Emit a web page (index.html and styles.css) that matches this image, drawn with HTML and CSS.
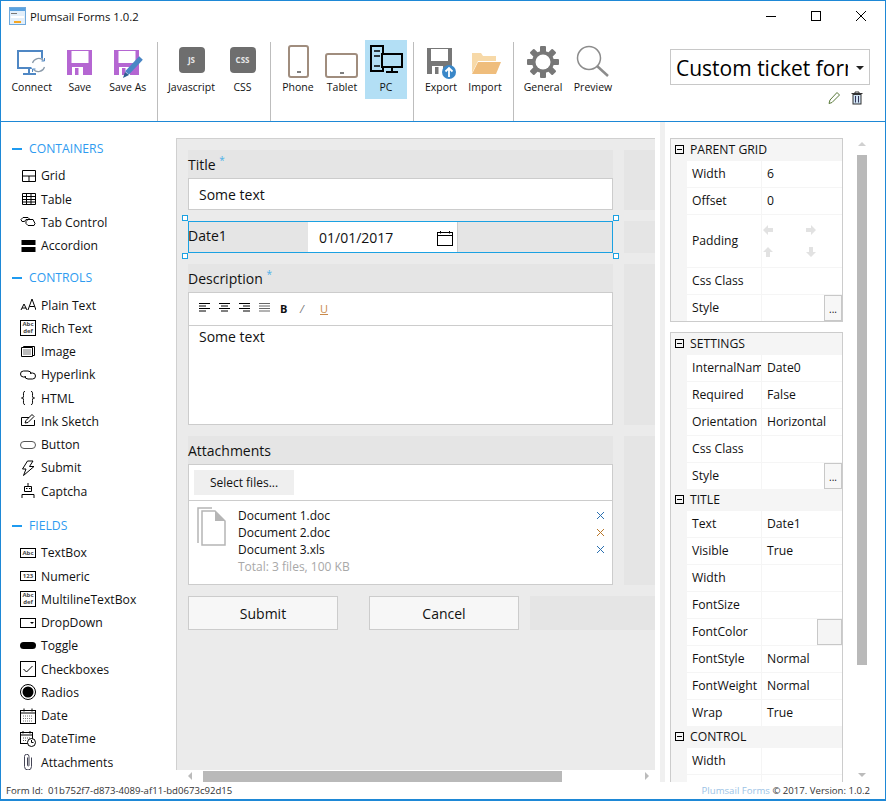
FILE: index.html
```html
<!DOCTYPE html>
<html lang="en">
<head>
	<meta charset="UTF-8">
	<title>Plumsail Forms 1.0.2</title>
	<link rel="stylesheet" href="styles.css">
</head>
<body>
<div class="window">

	<!-- Title bar -->
	<div class="titleBar">
		<svg class="appIcon" width="18" height="18" viewBox="0 0 18 18"><rect x="0.5" y="0.5" width="16" height="17" fill="#e3effa" stroke="#6fa9dc"/><rect x="1" y="1" width="15" height="3" fill="#5aa2e0"/><rect x="2" y="6" width="6" height="1" fill="#777"/><rect x="2" y="9" width="13" height="2" fill="#fff"/><rect x="5" y="14" width="7" height="2" fill="#f5a623"/></svg>
		<span class="appName">Plumsail Forms 1.0.2</span>
		<div class="windowButtons">
			<svg width="12" height="12" viewBox="0 0 12 12"><path d="M1 6.5h10" stroke="#000"/></svg>
			<svg width="12" height="12" viewBox="0 0 12 12"><rect x="1.5" y="1.5" width="9" height="9" fill="none" stroke="#000"/></svg>
			<svg width="12" height="12" viewBox="0 0 12 12"><path d="M1 1l10 10M11 1L1 11" stroke="#000"/></svg>
		</div>
	</div>

	<!-- Toolbar -->
	<div class="toolbar">
		<div class="toolGroup groupFile">
			<div class="tool">
				<svg width="32" height="30" viewBox="0 0 32 30"><rect x="2" y="2" width="24" height="17" fill="none" stroke="#4f87c4" stroke-width="2"/><path d="M13 20v4M7 25h13" stroke="#4f87c4" stroke-width="2"/><circle cx="22.500" cy="16" r="7.500" fill="#fff"/><path d="M16.500 14a6.500 6.500 0 0111-2.500M28.500 18a6.500 6.500 0 01-11 2.500" fill="none" stroke="#8a9aaa" stroke-width="1.200"/><path d="M28.500 9v3h-3M16.500 23v-3h3" fill="none" stroke="#4f87c4"/></svg>
				<span>Connect</span>
			</div>
			<div class="tool">
				<svg width="32" height="30" viewBox="0 0 32 30"><path d="M3 1h25v25H3z" fill="#b566d2"/><rect x="7.500" y="2" width="17" height="12" fill="#fff"/><rect x="8" y="18" width="11" height="8" fill="#fff"/><rect x="11" y="19" width="3.500" height="7" fill="#b566d2"/></svg>
				<span>Save</span>
			</div>
			<div class="tool">
				<svg width="34" height="30" viewBox="0 0 34 30"><path d="M3 1h25v25H3z" fill="#b566d2"/><rect x="7.500" y="2" width="17" height="12" fill="#fff"/><rect x="8" y="18" width="11" height="8" fill="#fff"/><rect x="11" y="19" width="3.500" height="7" fill="#b566d2"/><path d="M30 9L16 24" stroke="#4a86c5" stroke-width="5"/><path d="M12 29l2-6 4 3z" fill="#2f5f90"/></svg>
				<span>Save As</span>
			</div>
		</div>
		<div class="toolGroup groupCode">
			<div class="tool">
				<div class="codeBadge">JS</div>
				<span>Javascript</span>
			</div>
			<div class="tool">
				<div class="codeBadge">CSS</div>
				<span>CSS</span>
			</div>
		</div>
		<div class="toolGroup groupDevice">
			<div class="tool">
				<svg width="32" height="34" viewBox="0 0 32 34"><rect x="7" y="1" width="19" height="31" rx="2" fill="#fff" stroke="#a08d7e" stroke-width="2"/><path d="M15 27h4" stroke="#555" stroke-width="1.5"/></svg>
				<span>Phone</span>
			</div>
			<div class="tool">
				<svg width="34" height="34" viewBox="0 0 34 34"><rect x="1" y="9" width="31" height="23" rx="2" fill="#fff" stroke="#a08d7e" stroke-width="2"/><path d="M15 28h4" stroke="#555" stroke-width="1.5"/></svg>
				<span>Tablet</span>
			</div>
			<div class="tool toolActive">
				<svg width="34" height="34" viewBox="0 0 34 34"><path d="M2 1h12v25H2z" fill="none" stroke="#000" stroke-width="2"/><path d="M5 6h6M5 11h6M5 21h6" stroke="#000" stroke-width="1.5"/><rect x="13" y="9" width="20" height="13" fill="#b3dff5" stroke="#000" stroke-width="2"/><path d="M23 22v4M17 27h12" stroke="#000" stroke-width="2"/></svg>
				<span>PC</span>
			</div>
		</div>
		<div class="toolGroup groupData">
			<div class="tool">
				<svg width="32" height="32" viewBox="0 0 32 32"><path d="M2 1h25v26H2z" fill="#777"/><rect x="6" y="2" width="17" height="12" fill="#fff"/><rect x="7" y="19" width="11" height="8" fill="#fff"/><rect x="10" y="20" width="3.500" height="7" fill="#777"/><circle cx="24" cy="25" r="7" fill="#3a87c8"/><path d="M24 30v-9M20.5 24.5L24 21l3.500 3.500" stroke="#fff" stroke-width="1.800" fill="none"/></svg>
				<span>Export</span>
			</div>
			<div class="tool">
				<svg width="32" height="30" viewBox="0 0 32 30"><path d="M3 24V4h9l2 3h13v5H9z" fill="#f7d9a8" /><path d="M3 25l6-12h23l-5 12z" fill="#efbd7c"/></svg>
				<span>Import</span>
			</div>
		</div>
		<div class="toolGroup groupView">
			<div class="tool toolWide">
				<svg width="34" height="34" viewBox="0 0 34 34"><g fill="#777"><rect x="14" y="1" width="6" height="32" rx="1"/><rect x="14" y="1" width="6" height="32" rx="1" transform="rotate(45 17 17)"/><rect x="14" y="1" width="6" height="32" rx="1" transform="rotate(90 17 17)"/><rect x="14" y="1" width="6" height="32" rx="1" transform="rotate(135 17 17)"/></g><circle cx="17" cy="17" r="11" fill="#777"/><circle cx="17" cy="17" r="7.500" fill="#fff"/></svg>
				<span>General</span>
			</div>
			<div class="tool toolWide">
				<svg width="34" height="34" viewBox="0 0 34 34"><circle cx="13" cy="13" r="11.500" fill="none" stroke="#8c8c8c" stroke-width="1.500"/><path d="M21 21l11 10" stroke="#8c8c8c" stroke-width="2.500"/></svg>
				<span>Preview</span>
			</div>
		</div>
		<div class="formPicker">
			<div class="formCombo">
				<span class="formName">Custom ticket form</span>
				<span class="comboArrow"></span>
			</div>
			<div class="formActions">
				<svg width="14" height="14" viewBox="0 0 14 14"><path d="M3 9l7-7.500 2.500 2.500L5 11.500l-3 1z" fill="#fff" stroke="#5a7a3a"/></svg>
				<svg width="14" height="14" viewBox="0 0 14 14"><path d="M1.500 2.500h11M5 2.500V1h4v1.500" fill="none" stroke="#333"/><rect x="3" y="3.500" width="8" height="9.500" fill="#cfe3f5" stroke="#333"/><path d="M5.500 5v6.500M8.500 5v6.500" stroke="#335"/></svg>
			</div>
		</div>
	</div>

	<div class="mainArea">

		<!-- Left palette -->
		<div class="palette">
			<div class="paletteHead">CONTAINERS</div>
			<div class="paletteItem"><svg width="16" height="16" viewBox="0 0 16 16"><path d="M2.500 2.500h13v11h-13zM2.500 8h13M9 8v5.500" fill="none" stroke="#000"/></svg>Grid</div>
			<div class="paletteItem"><svg width="16" height="16" viewBox="0 0 16 16"><path d="M2.500 2.500h13v11h-13zM2.500 5.500h13M2.500 8.500h13M2.500 11h13M6.500 2.500v11M11 2.500v11" fill="none" stroke="#000"/></svg>Table</div>
			<div class="paletteItem"><svg width="16" height="16" viewBox="0 0 16 16"><path d="M1 5.500l2-2h5l2 2H6l-1.500 2H2zM6 7.500l2-2h5l2 4-1 2H8l-2-2z" fill="none" stroke="#000"/></svg>Tab Control</div>
			<div class="paletteItem"><svg width="16" height="16" viewBox="0 0 16 16"><path d="M1.500 2h14v5h-14zM1.500 9h14v5h-14z" fill="#000"/></svg>Accordion</div>

			<div class="paletteHead headGap">CONTROLS</div>
			<div class="paletteItem"><svg width="16" height="16" viewBox="0 0 16 16"><path d="M1 13l3-6 3 6M2 11h4M8 13l4-11 4 11M9.500 9.500h5" fill="none" stroke="#000"/></svg>Plain Text</div>
			<div class="paletteItem"><span class="abcBox abcTall">Abc<br>def</span>Rich Text</div>
			<div class="paletteItem"><svg width="16" height="16" viewBox="0 0 16 16"><path d="M1.500 3.500h11v9h-11zM3.500 3.500v-1h11v9h-2" fill="none" stroke="#000"/><rect x="3" y="5" width="8" height="6" fill="#bbb"/></svg>Image</div>
			<div class="paletteItem"><svg width="16" height="16" viewBox="0 0 16 16"><path d="M6 10H3.500a3 3 0 010-6H8a3 3 0 013 3M10 6h2.500a3 3 0 010 6H8a3 3 0 01-3-3" fill="none" stroke="#000"/></svg>Hyperlink</div>
			<div class="paletteItem"><svg width="16" height="16" viewBox="0 0 16 16"><path d="M5 1.500C3 1.500 3.500 3 3.500 5.500S3 8 1.500 8C3 8 3.500 8 3.500 10.500S3 14.500 5 14.500M11 1.500c2 0 1.500 1.500 1.500 4S13 8 14.500 8c-1.500 0-2 0-2 2.500s.5 4-1.500 4" fill="none" stroke="#000"/></svg>HTML</div>
			<div class="paletteItem"><svg width="16" height="16" viewBox="0 0 16 16"><path d="M9 4.500H1.500v8h13V7" fill="none" stroke="#000"/><path d="M5 10l1-2.500 6-6 2 2-6 6z" fill="#fff" stroke="#000"/></svg>Ink Sketch</div>
			<div class="paletteItem"><svg width="16" height="16" viewBox="0 0 16 16"><rect x="0.500" y="4.500" width="15" height="7" rx="3.500" fill="#fff" stroke="#555"/></svg>Button</div>
			<div class="paletteItem"><svg width="16" height="16" viewBox="0 0 16 16"><path d="M7.500 1H13L9.500 6.500H14L3.500 15.500 6 9H2.500z" fill="none" stroke="#000"/></svg>Submit</div>
			<div class="paletteItem"><svg width="16" height="16" viewBox="0 0 16 16"><path d="M8 0v3M4.500 3.500h7v5h-7zM2 15v-3.500h12V15" fill="none" stroke="#000"/><path d="M6 5.500h1.500M9 5.500h1.500" stroke="#000"/></svg>Captcha</div>

			<div class="paletteHead headGapWide">FIELDS</div>
			<div class="paletteItem"><span class="abcBox">Abc</span>TextBox</div>
			<div class="paletteItem"><span class="abcBox">123</span>Numeric</div>
			<div class="paletteItem"><span class="abcBox abcTall">Abc<br>def</span>MultilineTextBox</div>
			<div class="paletteItem"><svg width="16" height="16" viewBox="0 0 16 16"><rect x="0.500" y="3.500" width="15" height="9" fill="none" stroke="#000"/><path d="M10 7h4l-2 2z" fill="#000"/></svg>DropDown</div>
			<div class="paletteItem"><svg width="16" height="16" viewBox="0 0 16 16"><rect x="0" y="4" width="16" height="7" rx="3.500" fill="#000"/></svg>Toggle</div>
			<div class="paletteItem"><svg width="16" height="16" viewBox="0 0 16 16"><rect x="0.500" y="0.500" width="15" height="15" fill="none" stroke="#000"/><path d="M3.500 8l3 3 6-6" fill="none" stroke="#000"/></svg>Checkboxes</div>
			<div class="paletteItem"><svg width="16" height="16" viewBox="0 0 16 16"><circle cx="8" cy="8" r="7.500" fill="none" stroke="#000"/><circle cx="8" cy="8" r="5.500" fill="#000"/></svg>Radios</div>
			<div class="paletteItem"><svg width="16" height="16" viewBox="0 0 16 16"><rect x="0.500" y="2.500" width="15" height="13" fill="none" stroke="#000"/><path d="M0.500 5h15M4 0.500v3M12 0.500v3" stroke="#000"/><path d="M3 8h10M3 10.500h10M3 13h10" stroke="#777" stroke-dasharray="1 1"/></svg>Date</div>
			<div class="paletteItem"><svg width="16" height="16" viewBox="0 0 16 16"><rect x="0.500" y="1.500" width="12" height="11" fill="none" stroke="#000"/><path d="M0.500 4h12M3 0v2.500M10 0v2.500" stroke="#000"/><path d="M3 7h7M3 9.500h4" stroke="#555" stroke-dasharray="1 1"/><circle cx="11.500" cy="11.500" r="4" fill="#fff" stroke="#000"/><path d="M11.500 9v2.500h2" fill="none" stroke="#000"/></svg>DateTime</div>
			<div class="paletteItem"><svg width="16" height="16" viewBox="0 0 16 16"><path d="M12 4v9a3.500 3.500 0 01-7 0V3a2.200 2.200 0 014.500 0v9a.8.800 0 01-1.500 0V4" fill="none" stroke="#445" transform="translate(-0.500 -0.500)"/></svg>Attachments</div>
		</div>

		<!-- Form canvas -->
		<div class="canvasColumn">
			<div class="canvas">
				<div class="canvasRow">
					<div class="canvasMain">
						<div class="fieldLabel">Title <sup>*</sup></div>
						<div class="textInput">Some text</div>
					</div>
					<div class="ghostColumn"></div>
				</div>

				<div class="canvasRow">
					<div class="canvasMain dateRow">
						<div class="dateLabel">Date1</div>
						<div class="dateInput">
							01/01/2017
							<svg width="17" height="16" viewBox="0 0 17 16"><rect x="1.500" y="2.500" width="15" height="13" fill="#fff" stroke="#000"/><path d="M1.500 5.500h15M4.500 1v2.500M13.500 1v2.500" stroke="#000"/></svg>
						</div>
						<span class="handle handleTL"></span>
						<span class="handle handleTR"></span>
						<span class="handle handleBL"></span>
						<span class="handle handleBR"></span>
					</div>
					<div class="ghostColumn"></div>
				</div>

				<div class="canvasRow">
					<div class="canvasMain">
						<div class="fieldLabel">Description <sup>*</sup></div>
						<div class="editorBar">
							<svg width="14" height="10" viewBox="0 0 14 10"><path d="M1 .5h11M1 3h7M1 5.500h11M1 8h7" stroke="#000"/></svg>
							<svg width="14" height="10" viewBox="0 0 14 10"><path d="M1 .5h11M3 3h7M1 5.500h11M3 8h7" stroke="#000"/></svg>
							<svg width="14" height="10" viewBox="0 0 14 10"><path d="M1 .5h11M5 3h7M1 5.500h11M5 8h7" stroke="#000"/></svg>
							<svg width="14" height="10" viewBox="0 0 14 10"><path d="M1 .5h11M1 3h11M1 5.500h11M1 8h11" stroke="#666"/></svg>
							<b class="fmtBold">B</b>
							<i class="fmtItalic">/</i>
							<u class="fmtUnder">U</u>
						</div>
						<div class="editorBody">Some text</div>
					</div>
					<div class="ghostColumn"></div>
				</div>

				<div class="canvasRow">
					<div class="canvasMain">
						<div class="fieldLabel">Attachments</div>
						<div class="attachBox">
							<div class="attachTop"><div class="selectFiles">Select files...</div></div>
							<div class="attachList">
								<svg class="docIcon" width="30" height="40" viewBox="0 0 30 40"><path d="M1 36V1h14" fill="none" stroke="#b5b5b5" stroke-width="1.500"/><path d="M5 38V4h13l10 10v24z" fill="#fff" stroke="#b5b5b5" stroke-width="1.500"/><path d="M18 4v10h10z" fill="#b5b5b5"/></svg>
								<div class="attachFiles">
									<div class="attachFile">Document 1.doc<svg class="removeFile" width="9" height="9" viewBox="0 0 9 9"><path d="M1 1l7 7M8 1L1 8" stroke="#2A6FB0"/></svg></div>
									<div class="attachFile">Document 2.doc<svg class="removeFile" width="9" height="9" viewBox="0 0 9 9"><path d="M1 1l7 7M8 1L1 8" stroke="#B8772A"/></svg></div>
									<div class="attachFile">Document 3.xls<svg class="removeFile" width="9" height="9" viewBox="0 0 9 9"><path d="M1 1l7 7M8 1L1 8" stroke="#2A6FB0"/></svg></div>
									<div class="attachTotal">Total: 3 files, 100 KB</div>
								</div>
							</div>
						</div>
					</div>
					<div class="ghostColumn"></div>
				</div>

				<div class="buttonRow">
					<div class="formButton">Submit</div>
					<div class="formButton">Cancel</div>
					<div class="ghostButton"></div>
				</div>
			</div>
			<div class="hScroll">
				<span class="arrowLeft"></span>
				<div class="hThumb"></div>
				<span class="arrowRight"></span>
			</div>
		</div>

		<div class="gutterStrip"></div>

		<!-- Properties -->
		<div class="propColumn">
			<div class="propPanel">
				<div class="propHead propHeadTall"><span class="collapse"></span>PARENT GRID</div>
				<div class="propRow"><div class="propName">Width</div><div class="propValue">6</div></div>
				<div class="propRow"><div class="propName">Offset</div><div class="propValue">0</div></div>
				<div class="propRow rowPadding">
					<div class="propName">Padding</div>
					<div class="propValue paddingArrows">
						<svg width="12" height="12" viewBox="0 0 12 12"><path d="M1 6l5-5v3h5v4H6v3z" fill="#e2e2e2"/></svg>
						<svg width="12" height="12" viewBox="0 0 12 12"><path d="M11 6L6 1v3H1v4h5v3z" fill="#e2e2e2"/></svg>
						<svg width="12" height="12" viewBox="0 0 12 12"><path d="M6 1l5 5H8v5H4V6H1z" fill="#e2e2e2"/></svg>
						<svg width="12" height="12" viewBox="0 0 12 12"><path d="M6 11l5-5H8V1H4v5H1z" fill="#e2e2e2"/></svg>
					</div>
				</div>
				<div class="propRow"><div class="propName">Css Class</div><div class="propValue"></div></div>
				<div class="propRow"><div class="propName">Style</div><div class="propValue"><span class="dotsButton">...</span></div></div>
			</div>

			<div class="propPanel">
				<div class="propHead propHeadTall"><span class="collapse"></span>SETTINGS</div>
				<div class="propRow"><div class="propName">InternalName</div><div class="propValue">Date0</div></div>
				<div class="propRow"><div class="propName">Required</div><div class="propValue">False</div></div>
				<div class="propRow"><div class="propName">Orientation</div><div class="propValue">Horizontal</div></div>
				<div class="propRow"><div class="propName">Css Class</div><div class="propValue"></div></div>
				<div class="propRow"><div class="propName">Style</div><div class="propValue"><span class="dotsButton">...</span></div></div>
				<div class="propHead propHeadLow"><span class="collapse"></span>TITLE</div>
				<div class="propRow"><div class="propName">Text</div><div class="propValue">Date1</div></div>
				<div class="propRow"><div class="propName">Visible</div><div class="propValue">True</div></div>
				<div class="propRow"><div class="propName">Width</div><div class="propValue"></div></div>
				<div class="propRow"><div class="propName">FontSize</div><div class="propValue"></div></div>
				<div class="propRow"><div class="propName">FontColor</div><div class="propValue"><span class="colorButton"></span></div></div>
				<div class="propRow"><div class="propName">FontStyle</div><div class="propValue">Normal</div></div>
				<div class="propRow"><div class="propName">FontWeight</div><div class="propValue">Normal</div></div>
				<div class="propRow"><div class="propName">Wrap</div><div class="propValue">True</div></div>
				<div class="propHead propHeadLow"><span class="collapse"></span>CONTROL</div>
				<div class="propRow"><div class="propName">Width</div><div class="propValue"></div></div>
				<div class="propRow"><div class="propName">Placeholder</div><div class="propValue"></div></div>
			</div>
		</div>

		<div class="vScroll">
			<span class="arrowUp"></span>
			<div class="vThumb"></div>
			<span class="arrowDown"></span>
		</div>
	</div>

	<!-- Status bar -->
	<div class="statusBar">
		<span>Form Id:&nbsp; 01b752f7-d873-4089-af11-bd0673c92d15</span>
		<span><span class="statusLink">Plumsail Forms</span> &copy; 2017. Version: 1.0.2</span>
	</div>
</div>
</body>
</html>
```

FILE: styles.css
```css
html, body
{
	margin: 0;
	padding: 0;
	background: #FFFFFF;
}

body
{
	font-family: "Open Sans", "Noto Sans", sans-serif;
	font-size: 12.200px;
	color: #111111;
}

.window
{
	box-sizing: border-box;
	width: 886px;
	height: 801px;
	border: 1px solid #1E88D6;
	border-bottom-width: 2px;
	display: flex;
	flex-direction: column;
	overflow: hidden;
}

/* title bar */
.titleBar
{
	height: 30px;
	flex: none;
	display: flex;
	align-items: center;
	padding: 0 0 0 8px;
}

.appIcon
{
	margin-right: 3px;
}

.appName
{
	font-size: 11.300px;
}

.windowButtons
{
	margin-left: auto;
	display: flex;
	gap: 33px;
	padding-right: 18px;
	padding-bottom: 1px;
}

/* toolbar */
.toolbar
{
	height: 91px;
	flex: none;
	display: flex;
	border-bottom: 1px solid #1E88D6;
	box-sizing: border-box;
	padding-top: 9px;
}

.toolGroup
{
	display: flex;
	box-sizing: border-box;
	border-right: 1px solid #BDBDBD;
	height: 79px;
	margin-top: 2px;
}

.groupFile { width: 157px; padding-left: 7px; }
.groupFile .tool { width: 47.500px; }
.groupFile .tool + .tool { margin-left: 0.500px; }
.groupCode { width: 113px; padding-left: 8px; }
.groupCode .tool { width: 51px; }
.groupDevice { width: 143px; padding-left: 5px; }
.groupDevice .tool { width: 44px; }
.groupData { width: 100px; padding-left: 5px; }
.groupData .tool { width: 44px; }
.groupView { border-right: none; width: 156px; padding-left: 4px; }

.tool
{
	width: 47px;
	height: 59px;
	margin-top: -2px;
	display: flex;
	flex-direction: column;
	align-items: center;
	justify-content: flex-end;
	font-size: 10.500px;
	line-height: 14px;
	padding-bottom: 5px;
	box-sizing: border-box;
	gap: 1px;
}

.tool.toolWide
{
	width: 50px;
}

.groupDevice .toolActive
{
	width: 42px;
	margin: -2px 1px 0;
	background: #B3DFF5;
}

.codeBadge
{
	width: 26px;
	height: 26px;
	border-radius: 4px;
	background: #6E6E6E;
	color: #E8E8E8;
	font-size: 8px;
	font-weight: 700;
	line-height: 26px;
	text-align: center;
	margin-bottom: 6px;
}

.formPicker
{
	width: 199px;
}

.formCombo
{
	box-sizing: border-box;
	width: 200px;
	height: 36px;
	border: 1px solid #C8C8C8;
	display: flex;
	align-items: center;
	padding: 2px 0 0 5px;
	margin-top: 9px;
	background: #FFFFFF;
}

.formName
{
	font-size: 21px;
	width: 172px;
	overflow: hidden;
	white-space: nowrap;
	color: #000000;
}

.comboArrow
{
	width: 0;
	height: 0;
	margin-left: 8px;
	border-left: 4px solid transparent;
	border-right: 4px solid transparent;
	border-top: 4px solid #222222;
}

.formActions
{
	display: flex;
	justify-content: flex-end;
	gap: 9px;
	padding: 6px 5px 0 0;
}

.mainArea
{
	flex: 1;
	display: flex;
	min-height: 0;
	overflow: hidden;
}

/* palette */
.palette
{
	width: 175px;
	flex: none;
	padding-top: 15px;
	box-sizing: border-box;
}

.paletteHead
{
	height: 27.300px;
	line-height: 24px;
	color: #2E9BF0;
	padding-left: 28px;
	position: relative;
}

.paletteHead::before
{
	content: "";
	position: absolute;
	left: 11px;
	top: 11px;
	width: 10px;
	height: 2px;
	background: #1E9AF0;
}

.headGap
{
	margin-top: 9px;
}

.headGapWide
{
	margin-top: 11.200px;
}

.paletteItem
{
	height: 23.250px;
	display: flex;
	align-items: center;
	gap: 5px;
	padding-left: 19px;
	white-space: nowrap;
}

.paletteItem svg
{
	flex: none;
}

.abcBox
{
	box-sizing: border-box;
	flex: none;
	width: 16px;
	height: 10px;
	border: 1px solid #000000;
	font-size: 6px;
	font-weight: 700;
	line-height: 8px;
	text-align: center;
	color: #444444;
}

.abcTall
{
	height: 16px;
	line-height: 7px;
}

/* canvas */
.canvasColumn
{
	width: 479px;
	flex: none;
	padding-top: 16px;
	display: flex;
	flex-direction: column;
}

.canvas
{
	flex: 1;
	min-height: 0;
	background: #EBEBEB;
	border-top: 1px solid #D0D0D0;
	border-left: 1px solid #D0D0D0;
	padding: 11px 0 0 11px;
	overflow: hidden;
	box-sizing: border-box;
	font-size: 14px;
}

.canvasRow
{
	display: flex;
	gap: 11px;
	margin-bottom: 11px;
}

.canvasMain
{
	width: 425px;
	flex: none;
	position: relative;
	box-sizing: border-box;
}

.ghostColumn
{
	flex: 1;
	background: #E5E5E5;
	margin-right: -60px;
}

.fieldLabel
{
	height: 28px;
	line-height: 30px;
	background: #E5E5E5;
}

.fieldLabel sup
{
	color: #4DB0E8;
	font-size: 10px;
	line-height: 0;
}

.textInput
{
	box-sizing: border-box;
	height: 32px;
	line-height: 31px;
	background: #FFFFFF;
	border: 1px solid #CCCCCC;
	padding-left: 10px;
}

.dateRow
{
	display: flex;
	height: 32px;
	background: #E5E5E5;
	border: 1px solid #1BA1E2;
}

.dateLabel
{
	width: 120px;
	margin-left: -1px;
	line-height: 28px;
}

.dateInput
{
	width: 150px;
	box-sizing: border-box;
	background: #FFFFFF;
	border-right: 1px solid #CCCCCC;
	padding: 1px 4px 0 11px;
	line-height: 30px;
	display: flex;
	align-items: center;
	justify-content: space-between;
}

.handle
{
	position: absolute;
	box-sizing: border-box;
	width: 6px;
	height: 6px;
	background: #FFFFFF;
	border: 1px solid #1BA1E2;
}

.handleTL { left: -7px; top: -7px; }
.handleTR { right: -7px; top: -7px; }
.handleBL { left: -7px; bottom: -7px; }
.handleBR { right: -7px; bottom: -7px; }

.editorBar
{
	box-sizing: border-box;
	height: 34px;
	background: #FFFFFF;
	border: 1px solid #CCCCCC;
	display: flex;
	align-items: center;
	gap: 6px;
	padding: 0 0 2px 9px;
	font-size: 11px;
}

.fmtBold
{
	margin-left: 2px;
	width: 14px;
}

.fmtItalic
{
	color: #777777;
	width: 14px;
}

.fmtUnder
{
	color: #C98A4B;
}

.editorBody
{
	box-sizing: border-box;
	height: 99px;
	background: #FFFFFF;
	border: 1px solid #CCCCCC;
	border-top: none;
	padding-left: 10px;
	line-height: 22px;
}

.attachBox
{
	box-sizing: border-box;
	height: 121px;
	background: #FFFFFF;
	border: 1px solid #CCCCCC;
	font-size: 12px;
}

.attachTop
{
	height: 30px;
	border-bottom: 1px solid #CCCCCC;
	padding: 5px 0 0 5px;
}

.selectFiles
{
	width: 100px;
	height: 25px;
	line-height: 25px;
	background: #EFEFEF;
	text-align: center;
}

.attachList
{
	display: flex;
	padding: 6px 7px 0 8px;
}

.docIcon
{
	margin-right: 11px;
	flex: none;
}

.attachFiles
{
	flex: 1;
}

.attachFile
{
	height: 17px;
	line-height: 17px;
	display: flex;
	justify-content: space-between;
	align-items: center;
}

.attachTotal
{
	line-height: 17px;
	color: #A8A8A8;
}

.buttonRow
{
	display: flex;
	height: 34px;
}

.formButton
{
	box-sizing: border-box;
	width: 150px;
	flex: none;
	margin-right: 31px;
	background: #F7F7F7;
	border: 1px solid #CCCCCC;
	text-align: center;
	line-height: 33px;
}

.formButton + .formButton
{
	margin-right: 11px;
}

.ghostButton
{
	flex: 1;
	background: #E5E5E5;
	margin-right: -60px;
}

.hScroll
{
	height: 12px;
	flex: none;
	position: relative;
	display: flex;
	align-items: center;
}

.arrowLeft, .arrowRight, .arrowUp, .arrowDown
{
	position: absolute;
	width: 0;
	height: 0;
	border: 4px solid transparent;
}

.arrowLeft { left: 12px; border-right-color: #BBBBBB; border-left-width: 0; }
.arrowRight { right: 6px; border-left-color: #BBBBBB; border-right-width: 0; }
.arrowUp { top: 20px; left: 1px; border-bottom-color: #D0D0D0; border-top-width: 0; }
.arrowDown { bottom: 5px; left: 1px; border-top-color: #BBBBBB; border-bottom-width: 0; }

.hThumb
{
	width: 359px;
	height: 11px;
	margin-left: 27px;
	background: #B9B9B9;
}

.gutterStrip
{
	width: 5px;
	flex: none;
	margin-left: 5px;
	background: #F0F0F0;
}

/* properties */
.propColumn
{
	width: 173px;
	flex: none;
	margin-left: 5px;
	padding-top: 16px;
	box-sizing: border-box;
	overflow: hidden;
}

.propPanel
{
	box-sizing: border-box;
	border: 1px solid #CCCCCC;
	margin-bottom: 10px;
	background: #F5F5F5;
}

.propHead
{
	background: #F5F5F5;
	display: flex;
	align-items: center;
	gap: 6px;
	padding-left: 4px;
}

.propHeadTall
{
	height: 21px;
	padding-bottom: 1px;
}

.propHeadLow
{
	height: 19px;
	padding-bottom: 2px;
}

.collapse
{
	box-sizing: border-box;
	width: 9px;
	height: 9px;
	border: 1px solid #000000;
	position: relative;
	flex: none;
}

.collapse::after
{
	content: "";
	position: absolute;
	left: 1px;
	right: 1px;
	top: 3px;
	height: 1px;
	background: #000000;
}

.propRow
{
	display: grid;
	grid-template-columns: 74px 1fr;
	column-gap: 1px;
	height: 26px;
	margin-bottom: 1px;
	margin-left: 16px;
	background: #F5F5F5;
}

.propRow:last-child
{
	margin-bottom: 0;
}

.rowPadding
{
	height: 52px;
}

.propName, .propValue
{
	background: #FFFFFF;
	line-height: 26px;
	padding-left: 5px;
	white-space: nowrap;
	overflow: hidden;
}

.rowPadding .propName
{
	line-height: 52px;
}

.propValue
{
	position: relative;
}

.paddingArrows
{
	display: grid;
	grid-template-columns: 12px 12px;
	column-gap: 31px;
	align-content: space-around;
	padding: 4px 0;
}

.dotsButton
{
	position: absolute;
	right: 0;
	top: 0;
	box-sizing: border-box;
	width: 18px;
	height: 26px;
	border: 1px solid #C8C8C8;
	background: #F7F7F7;
	text-align: center;
	line-height: 26px;
	font-size: 10px;
}

.colorButton
{
	position: absolute;
	right: 0;
	top: 0;
	box-sizing: border-box;
	width: 25px;
	height: 26px;
	border: 1px solid #C8C8C8;
	background: #F5F5F5;
}

.vScroll
{
	width: 10px;
	flex: none;
	margin-left: 14px;
	position: relative;
}

.vThumb
{
	margin-top: 33px;
	height: 510px;
	background: #B9B9B9;
}

/* status bar */
.statusBar
{
	height: 17px;
	flex: none;
	display: flex;
	justify-content: space-between;
	align-items: center;
	font-size: 9.600px;
	padding: 0 15px 0 5px;
	color: #333333;
}

.statusLink
{
	color: #9CC3E6;
}
```
